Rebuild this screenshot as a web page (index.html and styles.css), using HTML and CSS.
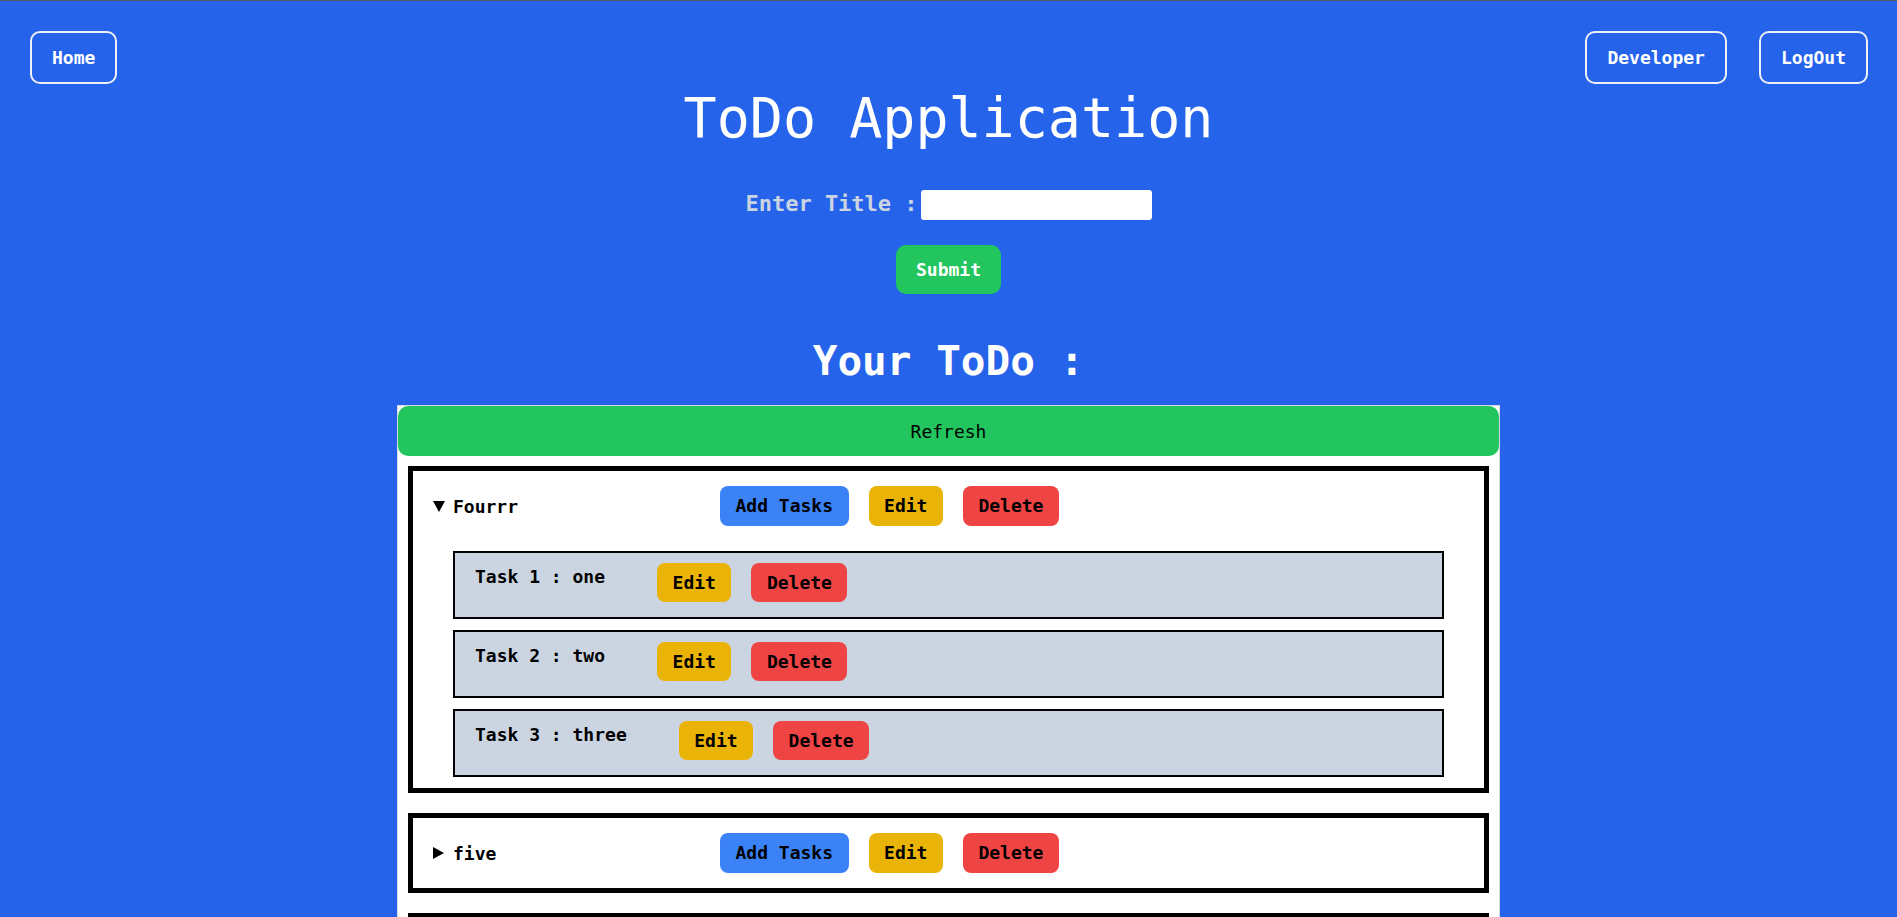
FILE: index.html
```html
<!DOCTYPE html>
<html lang="en">
<head>
<meta charset="utf-8">
<title>ToDo Application</title>
<link rel="stylesheet" href="styles.css">
</head>
<body>
  <header class="topbar">
    <a class="nav-btn" href="#">Home</a>
    <nav class="nav-right">
      <a class="nav-btn" href="#">Developer</a>
      <a class="nav-btn" href="#">LogOut</a>
    </nav>
  </header>

  <h1 class="app-title">ToDo Application</h1>

  <form class="new-todo" onsubmit="return false">
    <div class="field-row">
      <label class="field-label" for="title">Enter Title :</label>
      <input class="field-input" id="title" type="text">
    </div>
    <button class="submit-btn" type="submit">Submit</button>
  </form>

  <h2 class="list-title">Your ToDo :</h2>

  <section class="todo-panel">
    <button class="refresh-btn" type="button">Refresh</button>

    <details class="todo-card" open>
      <summary class="todo-head">
        <svg class="tri tri-open" width="12" height="11" viewBox="0 0 12 11"><path d="M0 0H12L6 11Z" fill="#000"/></svg>
        <svg class="tri tri-closed" width="11" height="12" viewBox="0 0 11 12"><path d="M0 0L11 6L0 12Z" fill="#000"/></svg>
        <span class="todo-name">Fourrr</span>
        <button class="btn btn-blue" type="button">Add Tasks</button>
        <button class="btn btn-yellow" type="button">Edit</button>
        <button class="btn btn-red" type="button">Delete</button>
      </summary>
      <ul class="task-list">
        <li class="task">
          <span class="task-name">Task 1 : one</span>
          <button class="btn btn-task btn-yellow" type="button">Edit</button>
          <button class="btn btn-task btn-red" type="button">Delete</button>
        </li>
        <li class="task">
          <span class="task-name">Task 2 : two</span>
          <button class="btn btn-task btn-yellow" type="button">Edit</button>
          <button class="btn btn-task btn-red" type="button">Delete</button>
        </li>
        <li class="task">
          <span class="task-name">Task 3 : three</span>
          <button class="btn btn-task btn-yellow" type="button">Edit</button>
          <button class="btn btn-task btn-red" type="button">Delete</button>
        </li>
      </ul>
    </details>

    <details class="todo-card">
      <summary class="todo-head">
        <svg class="tri tri-open" width="12" height="11" viewBox="0 0 12 11"><path d="M0 0H12L6 11Z" fill="#000"/></svg>
        <svg class="tri tri-closed" width="11" height="12" viewBox="0 0 11 12"><path d="M0 0L11 6L0 12Z" fill="#000"/></svg>
        <span class="todo-name">five</span>
        <button class="btn btn-blue" type="button">Add Tasks</button>
        <button class="btn btn-yellow" type="button">Edit</button>
        <button class="btn btn-red" type="button">Delete</button>
      </summary>
    </details>

    <div class="todo-card todo-card-empty"></div>
  </section>
</body>
</html>
```

FILE: styles.css
```css
html {
  background: #2563eb;
  scrollbar-width: none;
}
html::-webkit-scrollbar { display: none; }

body {
  margin: 0;
  border-top: 1px solid #5a5a5a;
  background: #2563eb;
  font-family: "DejaVu Sans Mono", "Liberation Mono", monospace;
  font-size: 18px;
  color: #fff;
  padding-bottom: 40px;
}

.topbar {
  display: flex;
  justify-content: space-between;
  align-items: flex-start;
  padding: 30px 29px 0 30px;
}

.nav-right {
  display: flex;
  gap: 32px;
}

.nav-btn {
  display: block;
  border: 2px solid #eef0f5;
  border-radius: 10px;
  padding: 12px 20px;
  line-height: 25px;
  font-size: 18px;
  font-weight: bold;
  color: #fff;
  text-decoration: none;
}

.app-title {
  margin: 2px 0 0;
  font-size: 55px;
  font-weight: normal;
  line-height: 64px;
  text-align: center;
}

.new-todo {
  margin: 40px 0 0;
}

.field-row {
  display: flex;
  justify-content: center;
  align-items: center;
  height: 30px;
}

.field-label {
  font-size: 22px;
  font-weight: bold;
  color: #cbd5e1;
  line-height: 30px;
  padding-bottom: 2px;
}

.field-input {
  width: 231px;
  height: 30px;
  box-sizing: border-box;
  margin-left: 3px;
  border: none;
  border-radius: 3px;
  background: #fff;
  padding: 0 6px;
  font: inherit;
}

.submit-btn {
  display: block;
  margin: 25px auto 0;
  height: 49px;
  padding: 0 20px;
  border: none;
  border-radius: 10px;
  background: #22c55e;
  color: #fff;
  font-family: inherit;
  font-size: 18px;
  font-weight: bold;
  line-height: 49px;
}

.list-title {
  margin: 43px 0 0;
  font-size: 41px;
  font-weight: bold;
  line-height: 48px;
  text-align: center;
}

.todo-panel {
  width: 1103px;
  box-sizing: border-box;
  margin: 20px auto 0;
  background: #fff;
  border: 1px solid #d6d9de;
  color: #000;
  padding-bottom: 20px;
}

.refresh-btn {
  display: block;
  width: 100%;
  height: 50px;
  border: none;
  border-radius: 10px;
  background: #22c55e;
  color: #000;
  font-family: inherit;
  font-size: 18px;
  line-height: 50px;
}

.todo-card {
  margin: 10px 10px 0;
  border: 5px solid #000;
  padding: 15px 20px 15px;
}

.todo-card + .todo-card {
  margin-top: 20px;
}

.todo-card[open] {
  padding-bottom: 11px;
}

.todo-card-empty {
  height: 40px;
}

.todo-head {
  display: flex;
  align-items: center;
  height: 40px;
  list-style: none;
  cursor: pointer;
}

.todo-head::-webkit-details-marker { display: none; }

.tri {
  flex: none;
  display: block;
}

.tri-open { margin-right: 8px; }
.tri-closed { display: none; margin-right: 9px; }
.todo-card:not([open]) .tri-open { display: none; }
.todo-card:not([open]) .tri-closed { display: block; }

.todo-name {
  width: 267px;
  font-weight: bold;
  font-size: 18px;
}

.btn {
  height: 40px;
  padding: 0 15.5px;
  border: none;
  border-radius: 8px;
  font-family: inherit;
  font-size: 18px;
  font-weight: bold;
  line-height: 40px;
  color: #000;
}

.btn + .btn { margin-left: 20px; }

.btn-blue { background: #3b82f6; }
.btn-yellow { background: #eab308; }
.btn-red { background: #ef4444; }

.task-list {
  list-style: none;
  margin: 25px 20px 0;
  padding: 0;
}

.task {
  display: flex;
  align-items: flex-start;
  border: 2px solid #000;
  background: #cbd5e1;
  padding: 10px 20px 15px;
}

.task + .task { margin-top: 11px; }

.task-name {
  font-weight: bold;
  line-height: 28px;
  margin-right: 52px;
}

.btn-task {
  height: 39px;
  line-height: 39px;
}
```
